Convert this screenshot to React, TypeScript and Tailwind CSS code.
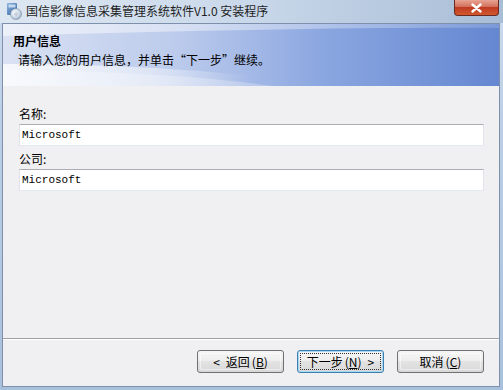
import React from "react";

const cjk = { fontFamily: '"Noto Sans CJK SC", "Noto Sans", sans-serif' };
const mono = { fontFamily: '"Liberation Mono", "Noto Sans CJK SC", monospace' };

function SetupIcon() {
  return (
    <svg width="18" height="18" viewBox="0 0 18 18">
      <defs>
        <linearGradient id="box" x1="0" y1="0" x2="1" y2="1">
          <stop offset="0" stopColor="#8fb4e0" />
          <stop offset="1" stopColor="#2d5f9e" />
        </linearGradient>
        <radialGradient id="cd" cx="0.4" cy="0.4" r="0.7">
          <stop offset="0" stopColor="#ffffff" />
          <stop offset="0.6" stopColor="#c9d6e6" />
          <stop offset="1" stopColor="#8a9db5" />
        </radialGradient>
      </defs>
      <rect x="2" y="1" width="10" height="12" rx="1" fill="url(#box)" />
      <rect x="3.5" y="2.5" width="7" height="3" fill="#d9e8f8" opacity="0.8" />
      <circle cx="11" cy="12" r="5.5" fill="url(#cd)" stroke="#7f8fa3" strokeWidth="0.6" />
      <circle cx="11" cy="12" r="1.3" fill="#f4f6f9" stroke="#7f8fa3" strokeWidth="0.5" />
    </svg>
  );
}

function HeaderArt() {
  return (
    <svg className="absolute inset-0" width="496" height="62" viewBox="0 0 496 62" preserveAspectRatio="none">
      <defs>
        <linearGradient id="hbg" x1="0" y1="0" x2="1" y2="0">
          <stop offset="0" stopColor="#dae2f3" />
          <stop offset="0.35" stopColor="#bccbec" />
          <stop offset="0.65" stopColor="#8aa6e0" />
          <stop offset="1" stopColor="#6587d1" />
        </linearGradient>
        <linearGradient id="hlow" x1="0" y1="0" x2="1" y2="0">
          <stop offset="0" stopColor="#ffffff" stopOpacity="0.75" />
          <stop offset="0.45" stopColor="#ffffff" stopOpacity="0.45" />
          <stop offset="0.75" stopColor="#ffffff" stopOpacity="0" />
        </linearGradient>
        <linearGradient id="htop" x1="0" y1="0" x2="1" y2="0">
          <stop offset="0" stopColor="#ffffff" stopOpacity="0.5" />
          <stop offset="0.6" stopColor="#ffffff" stopOpacity="0.35" />
          <stop offset="1" stopColor="#ffffff" stopOpacity="0.15" />
        </linearGradient>
      </defs>
      <rect width="496" height="62" fill="url(#hbg)" />
      <path d="M0 0 L496 0 L496 4 C380 3 200 6 0 12 Z" fill="url(#htop)" />
      <path d="M0 40 C120 40 230 47 330 62 L0 62 Z" fill="url(#hlow)" />
      <path d="M0 46 C110 47 200 52 270 62 L0 62 Z" fill="#ffffff" opacity="0.25" />
    </svg>
  );
}

function Btn({ label, hot, suffix, prefix, primary }: { label: string; hot: string; suffix?: string; prefix?: string; primary?: boolean }) {
  return (
    <div
      className={
        "w-[87px] h-[23px] rounded-[3px] border flex items-center justify-center text-[12px] text-black p-[2px] bg-[linear-gradient(#f6f6f6_0%,#eeeeee_45%,#e3e3e3_50%,#d8d8d8_100%)] " +
        (primary ? "border-[#3c7fb1] shadow-[inset_0_0_0_1px_#a9d7f2]" : "border-[#707070]")
      }
      style={cjk}
    >
      <div
        className={
          "w-full h-full flex items-center justify-center rounded-[1px] " +
          (primary ? "border border-dotted border-[#333]" : "border border-[#ffffff80]")
        }
      >
        {prefix && <span className="mr-[6px]">{prefix}</span>}
        <span>{label}</span>
        <span className="ml-[2px]">
          (<span className="underline">{hot}</span>)
        </span>
        {suffix && <span className="ml-[6px]">{suffix}</span>}
      </div>
    </div>
  );
}

function Field({ label, value }: { label: string; value: string }) {
  return (
    <div className="flex flex-col">
      <div className="h-[22px] flex items-end pb-[1px] text-[12px] text-black" style={cjk}>
        {label}
      </div>
      <div className="h-[22px] bg-white border-t border-t-[#abadb3] border-x border-x-[#e2e3ea] border-b border-b-[#e3e9ef] flex items-center pl-[2px] text-[11px] text-black" style={mono}>
        {value}
      </div>
    </div>
  );
}

export default function App() {
  return (
    <div className="w-[503px] h-[390px] flex flex-col bg-[linear-gradient(180deg,#cddbec_0%,#bccfe6_30%,#a9c0dc_100%)] overflow-hidden">
      {/* title bar */}
      <div className="h-[23px] flex items-start justify-between bg-[linear-gradient(90deg,#dde7f2_0%,#c9d8ea_50%,#a8bdd6_100%)]">
        <div className="flex items-center h-[22px] pl-[5px]">
          <SetupIcon />
          <span className="ml-[3px] text-[12px] text-[#1e1e1e]" style={cjk}>
            国信影像信息采集管理系统软件V1.0 安装程序
          </span>
        </div>
        <div className="w-[45px] h-[16px] mr-[4px] rounded-b-[4px] border border-t-0 border-[#6b2a20] bg-[linear-gradient(#e8a493_0%,#d2705b_45%,#bf3b22_50%,#d2582f_100%)] flex items-center justify-center">
          <svg width="11" height="10" viewBox="0 0 11 10">
            <path d="M1.5 1.5 L9.5 8.5 M9.5 1.5 L1.5 8.5" stroke="#ffffff" strokeWidth="2.4" strokeLinecap="round" />
          </svg>
        </div>
      </div>

      {/* client */}
      <div className="ml-[2px] mr-[3px] mb-[3px] flex-1 flex flex-col border border-[#7e90ab] bg-[#f0eff1]">
        <div className="relative h-[62px] border-b border-[#a0a0a0]">
          <HeaderArt />
          <div className="relative pl-[10px] pt-[9px]" style={cjk}>
            <div className="text-[12px] font-bold leading-[16px] text-black">用户信息</div>
            <div className="pl-[5px] mt-[3px] text-[12px] leading-[16px] text-black">请输入您的用户信息，并单击“下一步”继续。</div>
          </div>
        </div>

        <div className="flex-1 flex flex-col gap-[1px] pl-[16px] pr-[15px] pt-[16px]">
          <Field label="名称:" value="Microsoft" />
          <Field label="公司:" value="Microsoft" />
        </div>

        <div className="border-t border-[#a0a0a0] border-b border-b-white" />

        <div className="h-[46px] flex items-start justify-end gap-[13px] pt-[10px] pr-[15px]">
          <Btn prefix="<" label="返回" hot="B" />
          <Btn label="下一步" hot="N" suffix=">" primary />
          <Btn label="取消" hot="C" />
        </div>
      </div>
    </div>
  );
}
